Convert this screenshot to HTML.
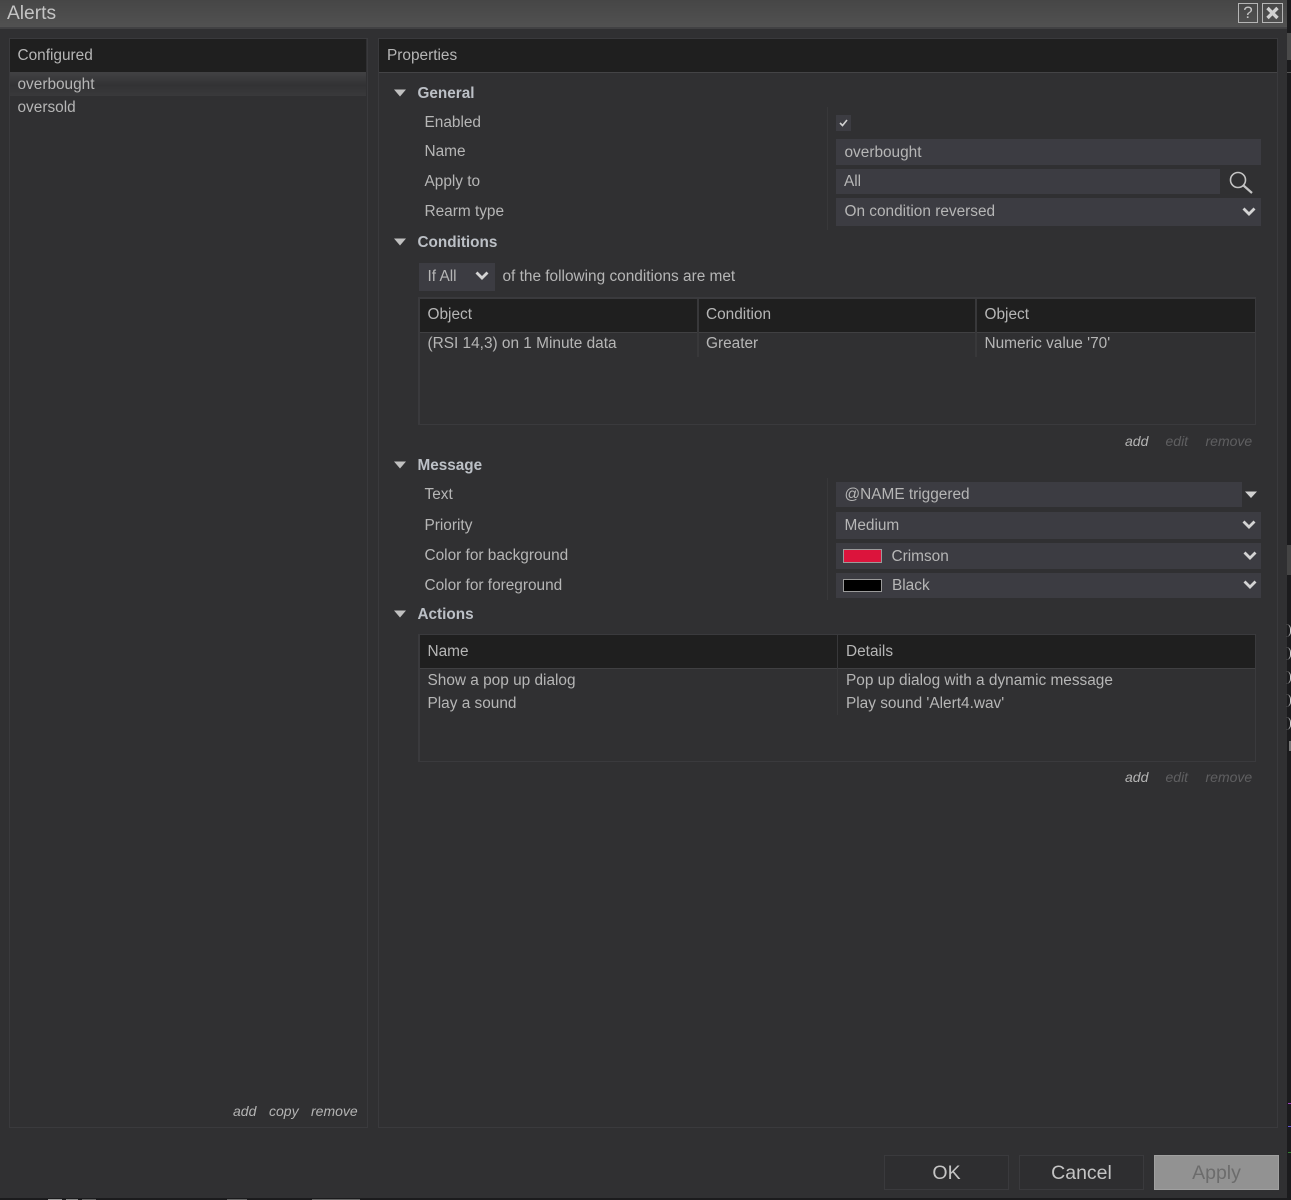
<!DOCTYPE html>
<html><head><meta charset="utf-8"><title>Alerts</title>
<style>
html,body{margin:0;padding:0;background:#1e1e20;}
#p{position:relative;width:1291px;height:1200px;overflow:hidden;background:#1b1b1d;font-family:"Liberation Sans",sans-serif;font-size:15.4px;color:#b6b6b6;}
#p div,#p svg{position:absolute;}
.t{line-height:20px;white-space:nowrap;height:20px;margin-top:1px;}
.b{font-weight:bold;color:#bcc0c6;font-size:15.3px;}
.i{font-style:italic;font-size:14px;color:#b4b4b4;margin-top:0;}
.d{color:#5f5f61;}
.f{background:#3c3c42;}
.h{background:#1f1f1f;}
.bd{border:1px solid #3a3a3d;box-sizing:border-box;}
.l{background:#38383a;}
</style></head><body><div id="p">
<div style="left:0;top:0;width:1287px;height:1198px;background:#303032"></div>
<div style="left:0;top:0;width:1287px;height:27px;background:linear-gradient(#464646,#515151)"></div>
<div style="left:0;top:27px;width:1287px;height:2px;background:#414143"></div>
<div class="t" style="left:7px;top:3px;font-size:19.2px;color:#c4c4c4">Alerts</div>
<div style="left:1238px;top:3px;width:20px;height:20px;border:1px solid #b5b5b5;box-sizing:border-box"></div>
<div class="t" style="left:1238px;top:2px;width:20px;text-align:center;font-size:17px;color:#c4c4c4">?</div>
<div style="left:1262px;top:3px;width:21px;height:20px;border:1px solid #b5b5b5;box-sizing:border-box"></div>
<svg style="left:1262px;top:3px" width="21" height="20"><path d="M5.500 5L15.500 15M15.500 5L5.500 15" stroke="#d0d0d0" stroke-width="3.400"/></svg>

<!-- left panel -->
<div class="bd" style="left:9px;top:38px;width:359px;height:1090px"></div>
<div class="h" style="left:10px;top:39px;width:356px;height:33px"></div>
<div style="left:10px;top:72px;width:356px;height:24px;background:linear-gradient(#424244,#323234 55%,#39393b)"></div>
<div class="t" style="left:17.500px;top:45px">Configured</div>
<div class="t" style="left:17.500px;top:74px">overbought</div>
<div class="t" style="left:17.500px;top:97px">oversold</div>
<div class="t i" style="left:233px;top:1101px">add</div>
<div class="t i" style="left:269px;top:1101px">copy</div>
<div class="t i" style="left:311px;top:1101px">remove</div>

<!-- right panel -->
<div class="bd" style="left:378px;top:38px;width:900px;height:1090px"></div>
<div class="h" style="left:379px;top:39px;width:898px;height:33px"></div>
<div style="left:379px;top:72px;width:898px;height:1px;background:#444446"></div>
<div class="t" style="left:387px;top:45px">Properties</div>

<svg style="left:393px;top:89px" width="14" height="8"><path d="M1 .5H13L7 7.500Z" fill="#c0c0c0"/></svg>
<div class="t b" style="left:417.500px;top:83px">General</div>
<div class="t" style="left:424.500px;top:112px">Enabled</div>
<div class="t" style="left:424.500px;top:141px">Name</div>
<div class="t" style="left:424.500px;top:171px">Apply to</div>
<div class="t" style="left:424.500px;top:201px">Rearm type</div>
<div class="l" style="left:827px;top:107px;width:1px;height:123px"></div>
<div class="f" style="left:836px;top:115px;width:15px;height:16px"></div>
<svg style="left:836px;top:115px" width="15" height="16"><path d="M4 8L6.500 10.500L11 5" fill="none" stroke="#d0d0d0" stroke-width="1.600"/></svg>
<div class="f" style="left:836px;top:139px;width:425px;height:26px"></div>
<div class="t" style="left:844.500px;top:142px">overbought</div>
<div class="f" style="left:836px;top:169px;width:384px;height:25px"></div>
<div class="t" style="left:844px;top:171px">All</div>
<svg style="left:1226px;top:168px" width="30" height="28"><circle cx="12" cy="12" r="7.500" fill="none" stroke="#c4c4c4" stroke-width="1.600"/><path d="M17.500 17.500L26 25" stroke="#c4c4c4" stroke-width="2.200"/></svg>
<div class="f" style="left:836px;top:198px;width:425px;height:28px"></div>
<div class="t" style="left:844.500px;top:201px">On condition reversed</div>
<svg style="left:1242px;top:207px" width="14" height="10"><path d="M1.500 1.500L7 7L12.500 1.500" fill="none" stroke="#d4d4d4" stroke-width="2.800"/></svg>

<svg style="left:393px;top:238px" width="14" height="8"><path d="M1 .5H13L7 7.500Z" fill="#c0c0c0"/></svg>
<div class="t b" style="left:417.500px;top:232px">Conditions</div>
<div class="f" style="left:419px;top:263px;width:76px;height:28px"></div>
<div class="t" style="left:427.500px;top:266px">If All</div>
<svg style="left:475px;top:271px" width="14" height="10"><path d="M1.500 1.500L7 7L12.500 1.500" fill="none" stroke="#d4d4d4" stroke-width="2.800"/></svg>
<div class="t" style="left:502.500px;top:266px">of the following conditions are met</div>

<div class="bd" style="left:418px;top:297px;width:838px;height:128px;border-width:2px 1px 1px 2px"></div>
<div class="h" style="left:420px;top:299px;width:835px;height:33px"></div>
<div style="left:420px;top:332px;width:835px;height:1px;background:#404042"></div>
<div class="l" style="left:697px;top:299px;width:2px;height:58px"></div>
<div class="l" style="left:975px;top:299px;width:2px;height:58px"></div>
<div class="t" style="left:427.500px;top:304px">Object</div>
<div class="t" style="left:706px;top:304px">Condition</div>
<div class="t" style="left:984.500px;top:304px">Object</div>
<div class="t" style="left:427.500px;top:333px">(RSI 14,3) on 1 Minute data</div>
<div class="t" style="left:706px;top:333px">Greater</div>
<div class="t" style="left:984.500px;top:333px">Numeric value '70'</div>
<div class="t i" style="left:1125px;top:431px">add</div>
<div class="t i d" style="left:1165.500px;top:431px">edit</div>
<div class="t i d" style="left:1205.500px;top:431px">remove</div>

<svg style="left:393px;top:461px" width="14" height="8"><path d="M1 .5H13L7 7.500Z" fill="#c0c0c0"/></svg>
<div class="t b" style="left:417.500px;top:455px">Message</div>
<div class="t" style="left:424.500px;top:484px">Text</div>
<div class="t" style="left:424.500px;top:515px">Priority</div>
<div class="t" style="left:424.500px;top:545px">Color for background</div>
<div class="t" style="left:424.500px;top:575px">Color for foreground</div>
<div class="l" style="left:827px;top:478px;width:1px;height:122px"></div>
<div class="f" style="left:836px;top:482px;width:406px;height:25px"></div>
<div class="t" style="left:844.500px;top:484px">@NAME triggered</div>
<svg style="left:1244px;top:491px" width="14" height="8"><path d="M1 .5H13L7 7Z" fill="#d0d0d0"/></svg>
<div class="f" style="left:836px;top:512px;width:425px;height:27px"></div>
<div class="t" style="left:844.500px;top:515px">Medium</div>
<svg style="left:1242px;top:520px" width="14" height="10"><path d="M1.500 1.500L7 7L12.500 1.500" fill="none" stroke="#d4d4d4" stroke-width="2.800"/></svg>
<div class="f" style="left:836px;top:543px;width:425px;height:26px"></div>
<div style="left:843px;top:549px;width:39px;height:14px;background:#dc143c;border:1px solid #9a9a9a;box-sizing:border-box"></div>
<div class="t" style="left:891.500px;top:546px">Crimson</div>
<svg style="left:1243px;top:551px" width="14" height="10"><path d="M1.500 1.500L7 7L12.500 1.500" fill="none" stroke="#d4d4d4" stroke-width="2.800"/></svg>
<div class="f" style="left:836px;top:573px;width:425px;height:25px"></div>
<div style="left:843px;top:579px;width:39px;height:13px;background:#000;border:1px solid #9a9a9a;box-sizing:border-box"></div>
<div class="t" style="left:892px;top:575px">Black</div>
<svg style="left:1243px;top:580px" width="14" height="10"><path d="M1.500 1.500L7 7L12.500 1.500" fill="none" stroke="#d4d4d4" stroke-width="2.800"/></svg>

<svg style="left:393px;top:610px" width="14" height="8"><path d="M1 .5H13L7 7.500Z" fill="#c0c0c0"/></svg>
<div class="t b" style="left:417.500px;top:604px">Actions</div>
<div class="bd" style="left:418px;top:634px;width:838px;height:128px;border-left-width:2px"></div>
<div class="h" style="left:420px;top:635px;width:835px;height:33px"></div>
<div style="left:420px;top:668px;width:835px;height:1px;background:#404042"></div>
<div class="l" style="left:837px;top:635px;width:1px;height:80px"></div>
<div class="t" style="left:427.500px;top:641px">Name</div>
<div class="t" style="left:846px;top:641px">Details</div>
<div class="t" style="left:427.500px;top:670px">Show a pop up dialog</div>
<div class="t" style="left:846px;top:670px">Pop up dialog with a dynamic message</div>
<div class="t" style="left:427.500px;top:693px">Play a sound</div>
<div class="t" style="left:846px;top:693px">Play sound 'Alert4.wav'</div>
<div class="t i" style="left:1125px;top:767px">add</div>
<div class="t i d" style="left:1165.500px;top:767px">edit</div>
<div class="t i d" style="left:1205.500px;top:767px">remove</div>

<!-- buttons -->
<div class="bd" style="left:884px;top:1155px;width:125px;height:35px;background:#2e2e30"></div>
<div class="t" style="left:884px;top:1162px;width:125px;text-align:center;font-size:19.500px;color:#c4c4c4">OK</div>
<div class="bd" style="left:1019px;top:1155px;width:125px;height:35px;background:#2e2e30"></div>
<div class="t" style="left:1019px;top:1162px;width:125px;text-align:center;font-size:19.500px;color:#c4c4c4">Cancel</div>
<div style="left:1154px;top:1155px;width:125px;height:35px;background:#929292;border:1px solid #a0a0a0;box-sizing:border-box"></div>
<div class="t" style="left:1154px;top:1162px;width:125px;text-align:center;font-size:19.500px;color:#6c6c6c">Apply</div>

<!-- background fragments right/bottom -->
<div style="left:1287px;top:33px;width:4px;height:27px;background:#4a4a4a"></div>
<div style="left:1287px;top:72px;width:4px;height:1px;background:#555"></div>
<div style="left:1287px;top:545px;width:4px;height:30px;background:#444"></div>
<div style="left:1286px;top:624px;width:5px;height:13px;border-right:1.500px solid #ccc;box-sizing:border-box;border-radius:0 7px 7px 0"></div>
<div style="left:1286px;top:647px;width:5px;height:13px;border-right:1.500px solid #ccc;box-sizing:border-box;border-radius:0 7px 7px 0"></div>
<div style="left:1286px;top:671px;width:5px;height:13px;border-right:1.500px solid #ccc;box-sizing:border-box;border-radius:0 7px 7px 0"></div>
<div style="left:1286px;top:694px;width:5px;height:13px;border-right:1.500px solid #ccc;box-sizing:border-box;border-radius:0 7px 7px 0"></div>
<div style="left:1286px;top:717px;width:5px;height:13px;border-right:1.500px solid #ccc;box-sizing:border-box;border-radius:0 7px 7px 0"></div>
<div style="left:1289px;top:741px;width:2px;height:10px;background:#777"></div>
<div style="left:1288px;top:1103px;width:3px;height:1px;background:#a040c0"></div>
<div style="left:1288px;top:1126px;width:3px;height:1px;background:#6050d0"></div>
<div style="left:1288px;top:1152px;width:3px;height:1px;background:#308030"></div>
<div style="left:48px;top:1199px;width:14px;height:1px;background:#999"></div>
<div style="left:66px;top:1199px;width:12px;height:1px;background:#888"></div>
<div style="left:82px;top:1199px;width:14px;height:1px;background:#666"></div>
<div style="left:227px;top:1199px;width:20px;height:1px;background:#666"></div>
<div style="left:312px;top:1199px;width:48px;height:1px;background:#666"></div>
</div></body></html>
